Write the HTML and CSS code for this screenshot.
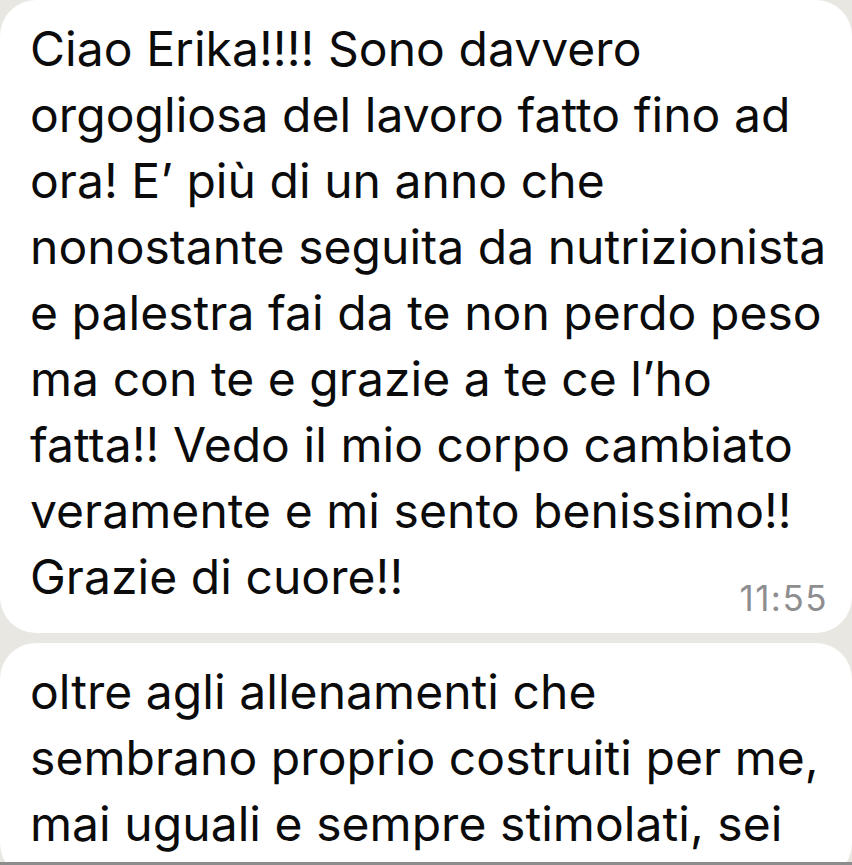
FILE: index.html
```html
<!DOCTYPE html>
<html lang="it">
<head>
    <meta charset="UTF-8">
    <meta name="viewport" content="width=device-width, initial-scale=1.0">
    <title>Messaggi</title>
    <link rel="stylesheet" href="styles.css">
</head>
<body>
    <!-- Chat -->
    <main class="chat">
        <div class="bubble">
            <p class="text">Ciao Erika!!!! Sono davvero<br>orgogliosa del lavoro fatto fino ad<br>ora! E’ più di un anno che<br>nonostante seguita da nutrizionista<br>e palestra fai da te non perdo peso<br>ma con te e grazie a te ce l’ho<br>fatta!! Vedo il mio corpo cambiato<br>veramente e mi sento benissimo!!<br>Grazie di cuore!!</p>
            <div class="time">11:55</div>
        </div>

        <div class="bubble">
            <p class="text">oltre agli allenamenti che<br>sembrano proprio costruiti per me,<br>mai uguali e sempre stimolati, sei</p>
        </div>
    </main>

    <div class="bottom-line"></div>
</body>
</html>
```

FILE: styles.css
```css
/* Base */
* {
    margin: 0;
    padding: 0;
    box-sizing: border-box;
}

body {
    background: #e9e7e2;
    font-family: Inter, 'Noto Sans', sans-serif;
    color: #0b0b0b;
    height: 865px;
    overflow: hidden;
    display: flex;
    flex-direction: column;
}

/* Chat */
.chat {
    flex: 1;
    display: flex;
    flex-direction: column;
    gap: 10px;
    overflow: hidden;
}

.bubble {
    background: #fff;
    border-radius: 36px;
    padding: 16px 20px 22px 30px;
}

.bubble:first-child {
    padding-bottom: 15px;
}

.text {
    font-size: 48px;
    line-height: 66px;
    letter-spacing: 0.05px;
}

.time {
    text-align: right;
    font-size: 35px;
    line-height: 40px;
    letter-spacing: 1.5px;
    color: #8e8e90;
    margin-top: -32px;
    padding-right: 4px;
}

.bottom-line {
    height: 3px;
    background: #8c8c8c;
}
```
